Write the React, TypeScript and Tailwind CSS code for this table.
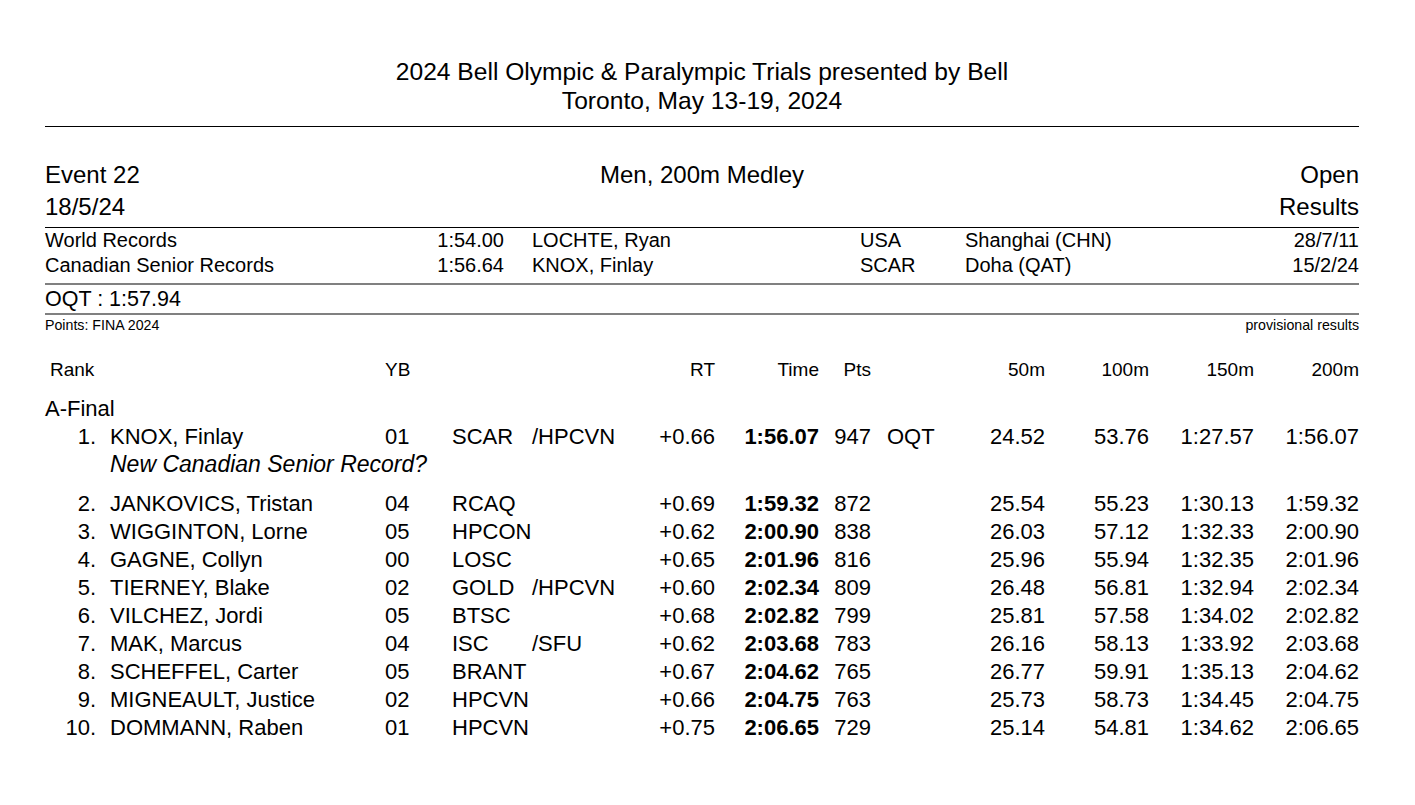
import React from "react";

type Row = {
  rank: string;
  name: string;
  yb: string;
  club: string;
  club2?: string;
  rt: string;
  time: string;
  pts: string;
  q?: string;
  s50: string;
  s100: string;
  s150: string;
  s200: string;
  note?: string;
};

const rows: Row[] = [
  { rank: "1.", name: "KNOX, Finlay", yb: "01", club: "SCAR", club2: "/HPCVN", rt: "+0.66", time: "1:56.07", pts: "947", q: "OQT", s50: "24.52", s100: "53.76", s150: "1:27.57", s200: "1:56.07", note: "New Canadian Senior Record?" },
  { rank: "2.", name: "JANKOVICS, Tristan", yb: "04", club: "RCAQ", rt: "+0.69", time: "1:59.32", pts: "872", s50: "25.54", s100: "55.23", s150: "1:30.13", s200: "1:59.32" },
  { rank: "3.", name: "WIGGINTON, Lorne", yb: "05", club: "HPCON", rt: "+0.62", time: "2:00.90", pts: "838", s50: "26.03", s100: "57.12", s150: "1:32.33", s200: "2:00.90" },
  { rank: "4.", name: "GAGNE, Collyn", yb: "00", club: "LOSC", rt: "+0.65", time: "2:01.96", pts: "816", s50: "25.96", s100: "55.94", s150: "1:32.35", s200: "2:01.96" },
  { rank: "5.", name: "TIERNEY, Blake", yb: "02", club: "GOLD", club2: "/HPCVN", rt: "+0.60", time: "2:02.34", pts: "809", s50: "26.48", s100: "56.81", s150: "1:32.94", s200: "2:02.34" },
  { rank: "6.", name: "VILCHEZ, Jordi", yb: "05", club: "BTSC", rt: "+0.68", time: "2:02.82", pts: "799", s50: "25.81", s100: "57.58", s150: "1:34.02", s200: "2:02.82" },
  { rank: "7.", name: "MAK, Marcus", yb: "04", club: "ISC", club2: "/SFU", rt: "+0.62", time: "2:03.68", pts: "783", s50: "26.16", s100: "58.13", s150: "1:33.92", s200: "2:03.68" },
  { rank: "8.", name: "SCHEFFEL, Carter", yb: "05", club: "BRANT", rt: "+0.67", time: "2:04.62", pts: "765", s50: "26.77", s100: "59.91", s150: "1:35.13", s200: "2:04.62" },
  { rank: "9.", name: "MIGNEAULT, Justice", yb: "02", club: "HPCVN", rt: "+0.66", time: "2:04.75", pts: "763", s50: "25.73", s100: "58.73", s150: "1:34.45", s200: "2:04.75" },
  { rank: "10.", name: "DOMMANN, Raben", yb: "01", club: "HPCVN", rt: "+0.75", time: "2:06.65", pts: "729", s50: "25.14", s100: "54.81", s150: "1:34.62", s200: "2:06.65" },
];

const GRID =
  "grid grid-cols-[51px_289px_67px_80px_83px_100px_104px_52px_74px_100px_104px_105px_105px]";

function ResultRow({ r }: { r: Row }) {
  return (
    <div className={`${GRID} h-[28px] items-center text-[22px] leading-[28px] whitespace-nowrap`}>
      <div className="text-right">{r.rank}</div>
      <div className="pl-[14px]">{r.name}</div>
      <div>{r.yb}</div>
      <div>{r.club}</div>
      <div>{r.club2 ?? ""}</div>
      <div className="text-right">{r.rt}</div>
      <div className="text-right font-bold">{r.time}</div>
      <div className="text-right">{r.pts}</div>
      <div className="pl-[16px]">{r.q ?? ""}</div>
      <div className="text-right">{r.s50}</div>
      <div className="text-right">{r.s100}</div>
      <div className="text-right">{r.s150}</div>
      <div className="text-right">{r.s200}</div>
    </div>
  );
}

export default function App() {
  return (
    <div
      className="w-[1415px] h-[805px] bg-white text-black pl-[45px] pr-[56px] pt-[57px] overflow-hidden"
      style={{ fontFamily: '"Liberation Sans", Arial, sans-serif' }}
    >
      {/* Title */}
      <div className="text-center text-[24.6px] leading-[29px]">
        <div>2024 Bell Olympic &amp; Paralympic Trials presented by Bell</div>
        <div>Toronto, May 13-19, 2024</div>
      </div>
      <div className="mt-[11px] h-[1px] bg-black" />

      {/* Event header */}
      <div className="mt-[32px] text-[24px] leading-[32px]">
        <div className="grid grid-cols-[1fr_auto_1fr]">
          <div>Event 22</div>
          <div className="text-center">Men, 200m Medley</div>
          <div className="text-right">Open</div>
        </div>
        <div className="flex justify-between">
          <div>18/5/24</div>
          <div>Results</div>
        </div>
      </div>
      <div className="mt-[4px] h-[1px] bg-black" />

      {/* Records */}
      <div className="text-[20px] leading-[25px] whitespace-nowrap">
        <div className="grid grid-cols-[355px_104px_356px_105px_1fr_auto]">
          <div>World Records</div>
          <div className="text-right">1:54.00</div>
          <div className="pl-[28px]">LOCHTE, Ryan</div>
          <div>USA</div>
          <div>Shanghai (CHN)</div>
          <div className="text-right">28/7/11</div>
        </div>
        <div className="grid grid-cols-[355px_104px_356px_105px_1fr_auto]">
          <div>Canadian Senior Records</div>
          <div className="text-right">1:56.64</div>
          <div className="pl-[28px]">KNOX, Finlay</div>
          <div>SCAR</div>
          <div>Doha (QAT)</div>
          <div className="text-right">15/2/24</div>
        </div>
      </div>
      <div className="mt-[5px] h-[2px] bg-[#808080]" />
      <div className="text-[21.5px] leading-[28px]">OQT : 1:57.94</div>
      <div className="h-[2px] bg-[#808080]" />
      <div className="flex justify-between text-[14.2px] leading-[20px]">
        <div>Points: FINA 2024</div>
        <div>provisional results</div>
      </div>

      {/* Column header */}
      <div className={`${GRID} mt-[23px] text-[19px] leading-[24px] whitespace-nowrap`}>
        <div className="col-span-2 pl-[5px]">Rank</div>
        <div>YB</div>
        <div />
        <div />
        <div className="text-right">RT</div>
        <div className="text-right">Time</div>
        <div className="text-right">Pts</div>
        <div />
        <div className="text-right">50m</div>
        <div className="text-right">100m</div>
        <div className="text-right">150m</div>
        <div className="text-right">200m</div>
      </div>

      <div className="mt-[15px] text-[22px] leading-[24px]">A-Final</div>

      <div className="mt-[2px]">
        <ResultRow r={rows[0]} />
        <div className="pl-[65px] text-[23px] leading-[26px] italic">{rows[0].note}</div>
        <div className="mt-[13px]">
          {rows.slice(1).map((r) => (
            <ResultRow key={r.rank} r={r} />
          ))}
        </div>
      </div>
    </div>
  );
}
